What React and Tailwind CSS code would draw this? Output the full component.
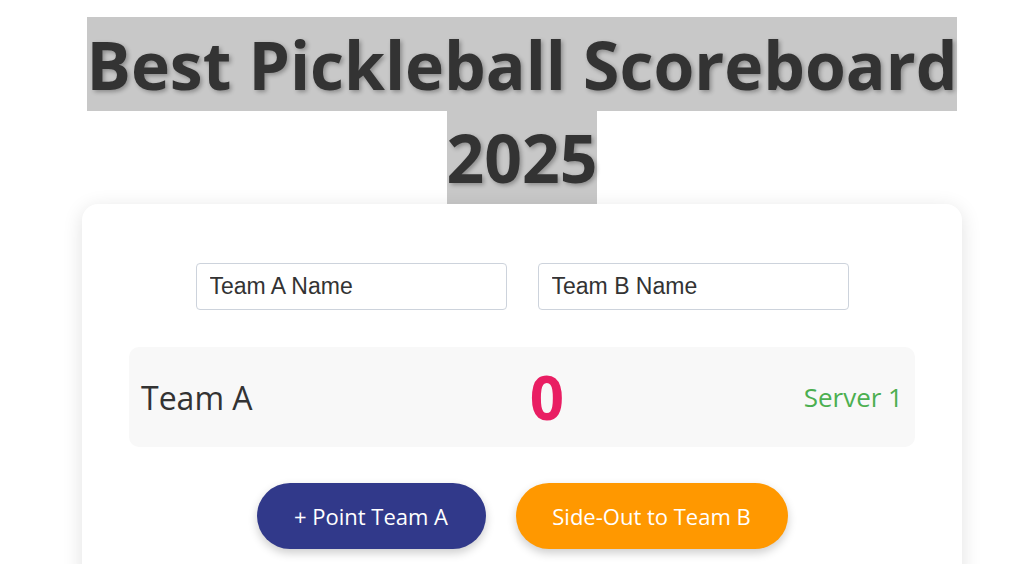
import React from 'react';

const sans = { fontFamily: '"Open Sans", "Noto Sans", sans-serif' };

export default function App() {
  return (
    <div className="min-h-screen bg-white pl-[20px]" style={sans}>
      <div className="max-w-[900px] mx-auto flex flex-col items-center">
        <h1 className="mt-[18px] text-center text-[66px] font-bold leading-[93px] text-[#333]">
          <span className="bg-[#c8c8c8] py-[2px] box-decoration-clone [text-shadow:2px_2px_4px_rgba(0,0,0,0.3)]">
            Best Pickleball Scoreboard 2025
          </span>
        </h1>

        <div className="w-[880px] bg-white rounded-2xl shadow-[0_4px_20px_rgba(0,0,0,0.12)] px-[47px] pt-[59px] pb-[40px] flex flex-col items-center">
          <div className="flex gap-[31px]">
            <input
              defaultValue="Team A Name"
              className="w-[311px] h-[47px] px-[13px] border border-[#cdd3dc] rounded-[4px] text-[23px] text-[#333] outline-none"
              style={{ fontFamily: '"Liberation Sans", Arial, sans-serif' }}
            />
            <input
              defaultValue="Team B Name"
              className="w-[311px] h-[47px] px-[13px] border border-[#cdd3dc] rounded-[4px] text-[23px] text-[#333] outline-none"
              style={{ fontFamily: '"Liberation Sans", Arial, sans-serif' }}
            />
          </div>

          <div className="mt-[37px] w-full h-[100px] bg-[#f8f8f8] rounded-[10px] px-[12px] flex items-center justify-between">
            <span className="text-[32px] text-[#333] w-[250px] pt-[2px]">Team A</span>
            <span className="text-[60px] font-bold text-[#e91e63] leading-none">0</span>
            <span className="text-[26px] text-[#4caf50] w-[200px] text-right">Server 1</span>
          </div>

          <div className="mt-[36px] flex gap-[30px]">
            <button className="w-[229px] h-[66px] rounded-full bg-[#31398a] text-white text-[22px] shadow-[0_4px_10px_rgba(0,0,0,0.2)]">
              + Point Team A
            </button>
            <button className="w-[272px] h-[66px] rounded-full bg-[#ff9800] text-white text-[22px] shadow-[0_4px_10px_rgba(0,0,0,0.2)]">
              Side-Out to Team B
            </button>
          </div>
        </div>
      </div>
    </div>
  );
}
